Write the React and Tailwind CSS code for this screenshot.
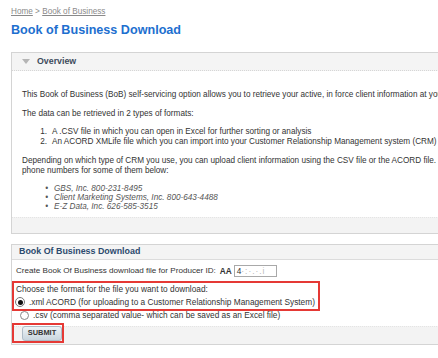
import React from 'react'

function App() {
  return (
    <div className="w-[438px] h-[358px] overflow-hidden bg-white font-['Liberation_Sans',Arial,sans-serif]">
      <div className="pl-[11px] pt-[7px]">
        <div className="text-[8.2px] leading-[10px] text-[#8a8a8a]">
          <span className="underline">Home</span> &gt; <span className="underline">Book of Business</span>
        </div>
        <h1 className="mt-[5px] text-[12.6px] leading-[16px] font-bold text-[#1d6fcf]">Book of Business Download</h1>

        {/* overview panel */}
        <div className="mt-[14px] w-[440px] border border-[#d4d4d4] border-r-0 overflow-hidden">
          <div className="h-[18px] bg-[#f4f4f4] border-b border-dotted border-[#d6d6d6] flex items-center pl-[10px]">
            <svg width="8" height="5" viewBox="0 0 8 5" className="mr-[7px]">
              <polygon points="0,0 8,0 4,5" fill="#b5b5b5" />
            </svg>
            <span className="text-[8.8px] font-bold text-[#3d4b5c]">Overview</span>
          </div>
          <div className="pl-[10px] pt-[19px] pb-[6px] text-[8.2px] text-[#333] whitespace-nowrap">
            <p className="leading-[9.5px]">This Book of Business (BoB) self-servicing option allows you to retrieve your active, in force client information at your convenience.</p>
            <p className="mt-[9.5px] leading-[9.5px]">The data can be retrieved in 2 types of formats:</p>
            <ol className="mt-[8.5px] leading-[10px]">
              <li className="flex"><span className="w-[30px] text-right pr-[5px]">1.</span>A .CSV file in which you can open in Excel for further sorting or analysis</li>
              <li className="flex"><span className="w-[30px] text-right pr-[5px]">2.</span>An ACORD XMLife file which you can import into your Customer Relationship Management system (CRM)</li>
            </ol>
            <p className="mt-[9px] leading-[9.5px]">
              Depending on which type of CRM you use, you can upload client information using the CSV file or the ACORD file.<br />
              phone numbers for some of them below:
            </p>
            <ul className="mt-[9px] leading-[9px] italic text-[#555]">
              <li className="flex"><span className="w-[32px] text-right pr-[6px]">•</span>GBS, Inc. 800-231-8495</li>
              <li className="flex"><span className="w-[32px] text-right pr-[6px]">•</span>Client Marketing Systems, Inc. 800-643-4488</li>
              <li className="flex"><span className="w-[32px] text-right pr-[6px]">•</span>E-Z Data, Inc. 626-585-3515</li>
            </ul>
          </div>
          <div className="h-[16px] bg-[#f3f3f3] border-t border-dotted border-[#e4e4e4]"></div>
        </div>

        {/* download panel */}
        <div className="mt-[10px] w-[440px] border border-[#d4d4d4] border-r-0">
          <div className="h-[15px] bg-[#f4f4f4] border-b border-[#dcdcdc] flex items-center pl-[7px]">
            <span className="text-[8.9px] font-bold text-[#2c4a6e]">Book Of Business Download</span>
          </div>
          <div className="text-[8.3px] text-[#333] whitespace-nowrap">
            <div className="mt-[5px] h-[12px] pl-[4px] flex items-center">
              <span className="text-[8.1px]">Create Book Of Business download file for Producer ID:</span>
              <span className="ml-[4px] font-bold">AA</span>
              <span className="ml-[2px] w-[43px] h-[12px] border border-[#a9a9a9] flex items-center pl-[2px] text-[#333]">
                4<span className="text-[#b8b8b8] tracking-[1px]">·:·.·.i</span>
              </span>
            </div>
            <div className="mt-[4px] w-[308px] border-2 border-[#e53935] pl-[2px] pb-[1px]">
              <div className="leading-[10px] mt-[1px]">Choose the format for the file you want to download:</div>
              <div className="flex items-center mt-[2px] h-[12px]">
                <span className="ml-[-1px] w-[10px] h-[10px] rounded-full border border-[#777] bg-white flex items-center justify-center">
                  <span className="w-[5px] h-[5px] rounded-full bg-[#111]"></span>
                </span>
                <span className="ml-[4px]">.xml ACORD (for uploading to a Customer Relationship Management System)</span>
              </div>
            </div>
            <div className="flex items-center h-[11px] pl-[8px] -mt-[1px]">
              <span className="w-[9px] h-[9px] rounded-full border border-[#888] bg-white"></span>
              <span className="ml-[4px]">.csv (comma separated value- which can be saved as an Excel file)</span>
            </div>
          </div>
          <div className="mt-[5px] h-[18px] bg-[#f3f3f3] border-t border-dotted border-[#e4e4e4]">
            <div className="-mt-[4px] w-[52px] h-[20px] border-2 border-[#e53935] flex items-center pl-[8px]">
              <button className="w-[40px] h-[15px] rounded-[3px] border border-[#aebbc6] bg-gradient-to-b from-[#eef3f6] to-[#c9d5de] text-[7.4px] font-bold text-[#333] flex items-center justify-center">
                SUBMIT
              </button>
            </div>
          </div>
        </div>
      </div>
    </div>
  )
}

export default App
